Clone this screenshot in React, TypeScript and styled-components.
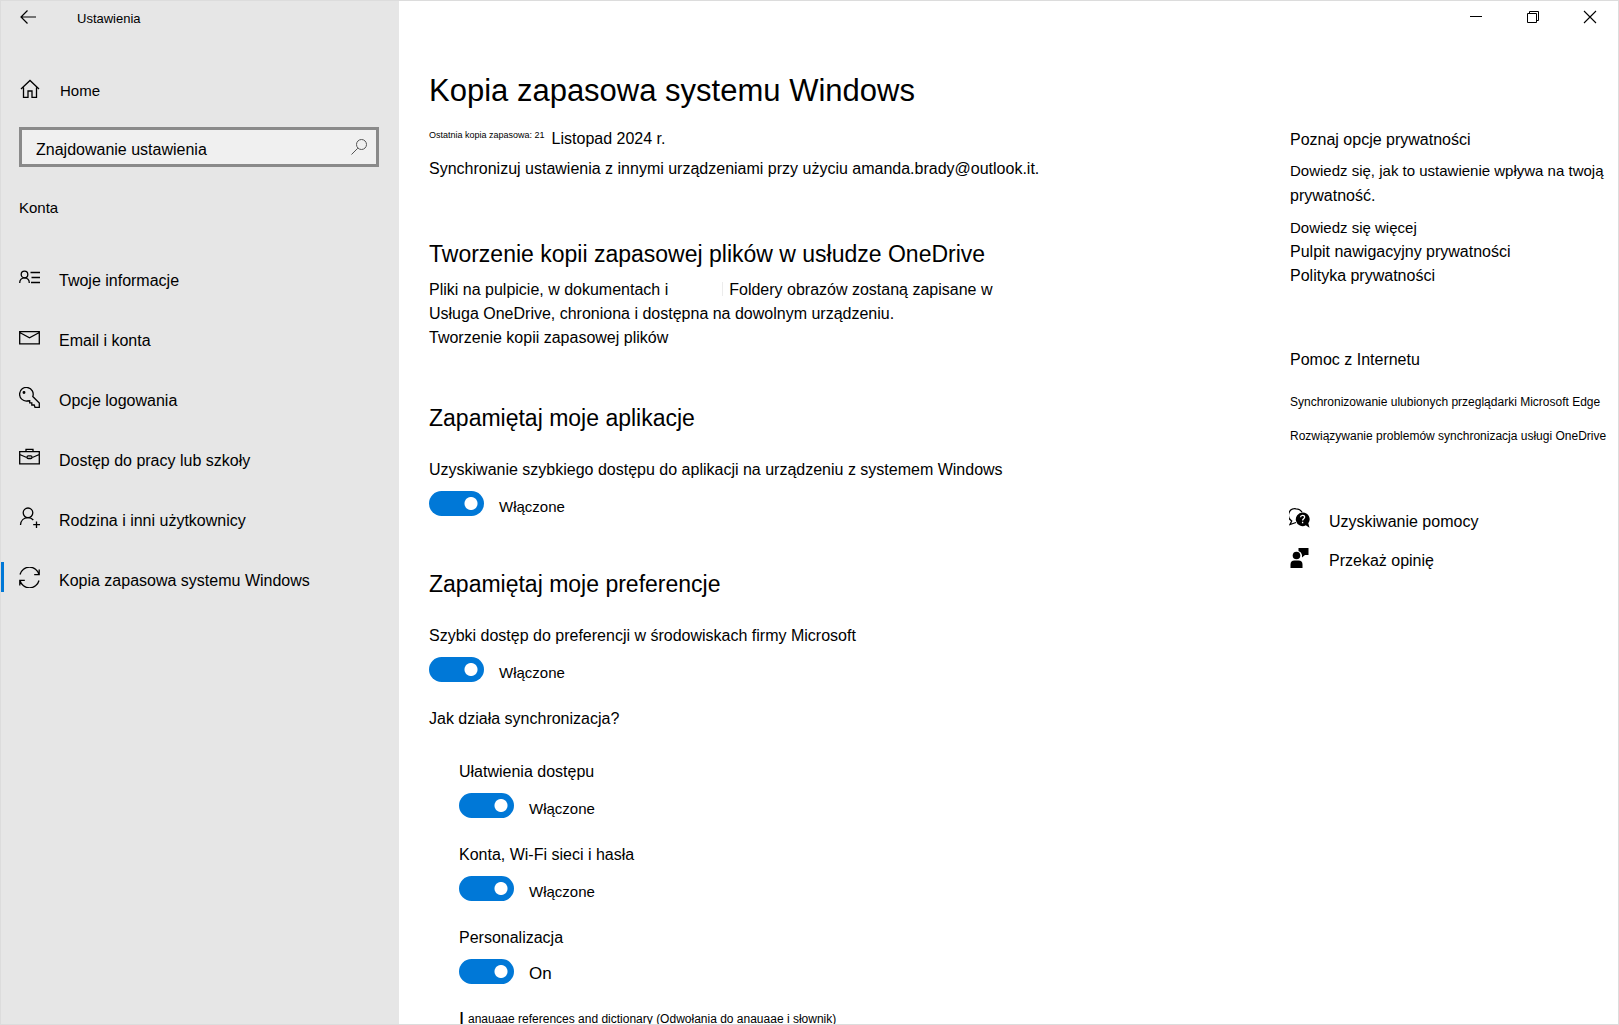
import React from "react";
import styled, { createGlobalStyle } from "styled-components";

const GlobalStyle = createGlobalStyle`
  * { box-sizing: border-box; }
  body { margin: 0; background: #fff; color: #000; font-family: "Liberation Sans", Arial, sans-serif; font-size: 16px; line-height: 24px; }
  button, input { font: inherit; color: inherit; }
  h1, h2, h3, p, ul { margin: 0; padding: 0; font-weight: 400; }
  ul { list-style: none; }
  a { color: inherit; text-decoration: none; }
`;

const Window = styled.div`
  display: grid;
  grid-template-columns: 398px minmax(0, 1fr);
  height: 100vh;
  overflow: hidden;
  border: 1px solid #dcdcdc;
`;

const Sidebar = styled.aside`
  display: flex;
  flex-direction: column;
  background: #e6e6e6;
`;

const SidebarTop = styled.div`
  display: flex;
  align-items: flex-start;
  height: 74px;
  padding: 6px 0 0 17px;
  gap: 37px;
  font-size: 13px;
  line-height: 24px;
`;

const IconButton = styled.button`
  display: grid;
  place-items: center;
  width: 22px;
  height: 20px;
  padding: 0;
  border: 0;
  background: none;
`;

const HomeLink = styled.a`
  display: flex;
  align-items: center;
  gap: 20px;
  height: 32px;
  padding-left: 19px;
  font-size: 15px;
  svg { margin-bottom: 5px; }
`;

const SearchBox = styled.label`
  display: flex;
  align-items: center;
  height: 40px;
  margin: 20px 20px 0 18px;
  padding: 0 8px 0 14px;
  border: 3px solid #8a8a8a;
  background: #f0f0f0;
`;

const SearchInput = styled.input`
  flex: 1;
  min-width: 0;
  height: 28px;
  padding: 6px 0 0;
  border: 0;
  outline: 0;
  background: none;
  &::placeholder { color: #000; opacity: 1; }
`;

const GroupTitle = styled.h2`
  margin: 29px 0 42px 18px;
  font-size: 15px;
  line-height: 24px;
`;

const NavItem = styled.a<{ $active?: boolean }>`
  display: flex;
  align-items: center;
  gap: 19px;
  height: 30px;
  margin-bottom: 30px;
  padding: 8px 0 0 ${(p) => (p.$active ? 15 : 18)}px;
  border-left: ${(p) => (p.$active ? "3px solid #0078d7" : "0")};
  svg { margin-bottom: 7px; }
`;

const Page = styled.div`
  display: flex;
  flex-direction: column;
  min-width: 0;
  min-height: 0;
`;

const Caption = styled.div`
  display: flex;
  flex-shrink: 0;
  justify-content: flex-end;
  gap: 35px;
  height: 69px;
  padding: 6px 17px 0 0;
`;

const Columns = styled.div`
  display: grid;
  grid-template-columns: minmax(0, 1fr) 328px;
`;

const Main = styled.main`
  padding-left: 30px;
`;

const PageTitle = styled.h1`
  font-size: 31px;
  line-height: 42px;
`;

const BackupDate = styled.p`
  display: flex;
  gap: 7px;
  margin-top: 15px;
  small { font-size: 9px; line-height: 17px; }
`;

const Text = styled.p<{ $top?: number }>`
  margin-top: ${(p) => p.$top ?? 0}px;
`;

const Section = styled.section<{ $top: number }>`
  margin-top: ${(p) => p.$top}px;
`;

const SectionTitle = styled.h2`
  font-size: 23px;
  line-height: 32px;
`;

const FolderLine = styled.span`
  display: flex;
  gap: 54px;
`;

const Folders = styled.span`
  padding-left: 7px;
  background: linear-gradient(#ececec, #ececec) 0 4px / 1px 14px no-repeat;
`;

const Toggle = styled.label`
  display: flex;
  gap: 15px;
  height: 25px;
`;

const ToggleInput = styled.input`
  appearance: none;
  width: 55px;
  height: 25px;
  margin: 0;
  border-radius: 13px;
  background: radial-gradient(circle at 42px 50%, #fff 6px, transparent 7px) #0078d7;
`;

const ToggleState = styled.span<{ $large?: boolean }>`
  padding-top: 4px;
  font-size: ${(p) => (p.$large ? 17 : 15)}px;
  line-height: ${(p) => (p.$large ? 21 : 24)}px;
`;

const SyncList = styled.ul`
  padding: 29px 0 0 30px;
`;

const SyncItem = styled.li`
  height: 83px;
`;

const ItemLabel = styled.div`
  padding-bottom: 9px;
`;

const NextItem = styled.li`
  display: flex;
  align-items: flex-start;
  font-size: 12px;
  line-height: 20px;
  white-space: nowrap;
`;

const Initial = styled.span`
  width: 9px;
  font-size: 20px;
`;

const Aside = styled.aside`
  display: flex;
  flex-direction: column;
  align-items: flex-start;
  padding-top: 58px;
`;

const AsideTitle = styled.h3<{ $top?: number }>`
  margin-top: ${(p) => p.$top ?? 0}px;
  font-size: 16px;
  line-height: 24px;
`;

const AsideText = styled.p`
  margin: 6px 0 8px;
  font-size: 15px;
  line-height: 25px;
  span { font-size: 16px; }
`;

const AsideLink = styled.a<{ $small?: boolean }>`
  font-size: ${(p) => (p.$small ? 15 : 16)}px;
`;

const HelpLinks = styled.div`
  display: flex;
  flex-direction: column;
  gap: 10px;
  margin: 18px 0 54px;
  font-size: 12px;
  white-space: nowrap;
`;

const ActionLink = styled.a`
  display: flex;
  align-items: center;
  gap: 19px;
  height: 39px;
  svg { margin: 0 0 7px -1px; }
`;

const Svg = ({ w = 21, h = 21, children, sw = 1.3, color = "#000" }: { w?: number; h?: number; sw?: number; color?: string; children: React.ReactNode }) => (
  <svg width={w} height={h} viewBox={`0 0 ${w} ${h}`} fill="none" stroke={color} strokeWidth={sw} aria-hidden="true">{children}</svg>
);

const BackIcon = () => <Svg w={18} h={16} sw={1.2}><path d="M16 8H1M7.500 1.500 1 8l6.500 6.500" /></Svg>;
const HomeIcon = () => <Svg w={20} h={20}><path d="M1 10 10 1.500l9 8.500M3.500 8.500V18.300H8V12h4v6.300h4.500V8.500" /></Svg>;
const SearchIcon = () => <Svg w={18} h={18} sw={1} color="#555"><circle cx="11.500" cy="6.500" r="5" /><path d="M7.800 10.200 1.500 16.500" /></Svg>;

const ContactIcon = () => <Svg><circle cx="5.500" cy="7.500" r="3.300" /><path d="M.7 16c0-3.300 2-5.200 4.800-5.200s4.800 1.900 4.800 5.200M11.500 5.500H21M12.500 10.500H21M12 15.500H21" /></Svg>;
const MailIcon = () => <Svg><path d="M.7 4.700h19.600v12.100H.7zM.7 5.500l9.800 5.200 9.800-5.200" /></Svg>;
const KeyIcon = () => <Svg><path d="M13.800 9.500A6.800 6.800 0 1 0 8 14l2.700-.2v2h2.100v2.200h2.400l.8 2.300h4.300v-4.200z" /><circle cx="5" cy="5.500" r=".8" fill="#000" /></Svg>;
const CaseIcon = () => <Svg><path d="M.7 4.700h19.600v12.100H.7zM7 4.500V2.300h7v2.200M.7 7.500l7 3M20.300 7.500l-7 3" /><rect x="8" y="8.900" width="5" height="2.600" rx="1.200" /></Svg>;
const FamilyIcon = () => <Svg><circle cx="9" cy="5.800" r="4.800" /><path d="M1.500 18c.2-4.500 3.300-7.400 7.500-7.400 2.200 0 4 .8 5.300 2.400M17.500 14.500v6.500M14.200 17.700H21" /></Svg>;
const SyncIcon = () => <Svg><path d="M1 7.500a9.800 9.800 0 0 1 19 0M20.200 2.500v5.200h-5M20 13.500a9.800 9.800 0 0 1-19 0M.8 18.500v-5.200h5" /></Svg>;

const HelpIcon = () => (
  <Svg>
    <path d="M7 14.500 1 16.500 2.700 13A6.600 6.600 0 0 1 7 .8c3 0 5 1.600 6 3.500" />
    <path d="M13.500 4.500a6.800 6.800 0 1 0 3.300 12.800l3.700 2.500-1.200-4.500A6.800 6.800 0 0 0 13.500 4.500Z" fill="#000" stroke="none" />
    <path d="M11.500 9.200c.2-2.700 4.300-2.400 4.100 0-.1 1.500-2 1.500-2 3.200M13.600 13.800v1.500" stroke="#fff" />
  </Svg>
);
const FeedbackIcon = () => (
  <Svg>
    <g fill="#000" stroke="none"><circle cx="7.500" cy="8.500" r="3.800" /><path d="M1.500 21v-3.500q0-4 4-4H9.500q4 0 4 4V21zM9.500 1h10v7h-3.500l-3 2.500V8q-.5-3-3.500-4z" /></g>
  </Svg>
);

const navigation = [
  { label: "Twoje informacje", Icon: ContactIcon },
  { label: "Email i konta", Icon: MailIcon },
  { label: "Opcje logowania", Icon: KeyIcon },
  { label: "Dostęp do pracy lub szkoły", Icon: CaseIcon },
  { label: "Rodzina i inni użytkownicy", Icon: FamilyIcon },
  { label: "Kopia zapasowa systemu Windows", Icon: SyncIcon, active: true },
];

const syncItems = [
  { label: "Ułatwienia dostępu", state: "Włączone" },
  { label: "Konta, Wi-Fi sieci i hasła", state: "Włączone" },
  { label: "Personalizacja", state: "On", large: true },
];

const Switch = ({ name, state = "Włączone", large }: { name: string; state?: string; large?: boolean }) => (
  <Toggle>
    <ToggleInput type="checkbox" role="switch" defaultChecked aria-label={name} />
    <ToggleState $large={large}>{state}</ToggleState>
  </Toggle>
);

export default function App() {
  return (
    <>
      <GlobalStyle />
      <Window>
        <Sidebar>
          <SidebarTop>
            <IconButton aria-label="Wstecz"><BackIcon /></IconButton>
            <span>Ustawienia</span>
          </SidebarTop>
          <HomeLink href="#home"><HomeIcon />Home</HomeLink>
          <SearchBox>
            <SearchInput type="text" placeholder="Znajdowanie ustawienia" aria-label="Znajdowanie ustawienia" />
            <SearchIcon />
          </SearchBox>
          <GroupTitle>Konta</GroupTitle>
          <nav>
            {navigation.map(({ label, Icon, active }) => (
              <NavItem key={label} href="#konta" $active={active}><Icon />{label}</NavItem>
            ))}
          </nav>
        </Sidebar>
        <Page>
          <Caption>
            <IconButton aria-label="Minimalizuj"><Svg w={14} h={14} sw={1}><path d="M1 6.500h12" /></Svg></IconButton>
            <IconButton aria-label="Przywróć"><Svg w={14} h={14} sw={1}><path d="M1.500 3.500h9v9h-9zM3.500 3.500v-2h9v9h-2" /></Svg></IconButton>
            <IconButton aria-label="Zamknij"><Svg w={14} h={14} sw={1.1}><path d="m1 1 12 12M13 1 1 13" /></Svg></IconButton>
          </Caption>
          <Columns>
            <Main>
              <PageTitle>Kopia zapasowa systemu Windows</PageTitle>
              <BackupDate><small>Ostatnia kopia zapasowa: 21</small>Listopad 2024 r.</BackupDate>
              <Text $top={6}>Synchronizuj ustawienia z innymi urządzeniami przy użyciu amanda.brady@outlook.it.</Text>
              <Section $top={57}>
                <SectionTitle>Tworzenie kopii zapasowej plików w usłudze OneDrive</SectionTitle>
                <Text $top={8}>
                  <FolderLine>Pliki na pulpicie, w dokumentach i <Folders>Foldery obrazów zostaną zapisane w</Folders></FolderLine>
                  Usługa OneDrive, chroniona i dostępna na dowolnym urządzeniu.
                </Text>
                <a href="#kopia">Tworzenie kopii zapasowej plików</a>
              </Section>
              <Section $top={52}>
                <SectionTitle>Zapamiętaj moje aplikacje</SectionTitle>
                <Text $top={24}>Uzyskiwanie szybkiego dostępu do aplikacji na urządzeniu z systemem Windows</Text>
                <Text as="div" $top={9}><Switch name="Zapamiętaj moje aplikacje" /></Text>
              </Section>
              <Section $top={52}>
                <SectionTitle>Zapamiętaj moje preferencje</SectionTitle>
                <Text $top={24}>Szybki dostęp do preferencji w środowiskach firmy Microsoft</Text>
                <Text as="div" $top={9}><Switch name="Zapamiętaj moje preferencje" /></Text>
                <Text $top={25}><a href="#synchronizacja">Jak działa synchronizacja?</a></Text>
                <SyncList>
                  {syncItems.map(({ label, state, large }) => (
                    <SyncItem key={label}>
                      <ItemLabel>{label}</ItemLabel>
                      <Switch name={label} state={state} large={large} />
                    </SyncItem>
                  ))}
                  <NextItem><Initial>L</Initial>anauaae references and dictionary (Odwołania do anauaae i słownik)</NextItem>
                </SyncList>
              </Section>
            </Main>
            <Aside>
              <AsideTitle>Poznaj opcje prywatności</AsideTitle>
              <AsideText>Dowiedz się, jak to ustawienie wpływa na twoją <span>prywatność.</span></AsideText>
              <AsideLink href="#wiecej" $small>Dowiedz się więcej</AsideLink>
              <AsideLink href="#pulpit">Pulpit nawigacyjny prywatności</AsideLink>
              <AsideLink href="#polityka">Polityka prywatności</AsideLink>
              <AsideTitle $top={60}>Pomoc z Internetu</AsideTitle>
              <HelpLinks>
                <a href="#edge">Synchronizowanie ulubionych przeglądarki Microsoft Edge</a>
                <a href="#onedrive">Rozwiązywanie problemów synchronizacja usługi OneDrive</a>
              </HelpLinks>
              <ActionLink href="#pomoc"><HelpIcon />Uzyskiwanie pomocy</ActionLink>
              <ActionLink href="#opinia"><FeedbackIcon />Przekaż opinię</ActionLink>
            </Aside>
          </Columns>
        </Page>
      </Window>
    </>
  );
}
